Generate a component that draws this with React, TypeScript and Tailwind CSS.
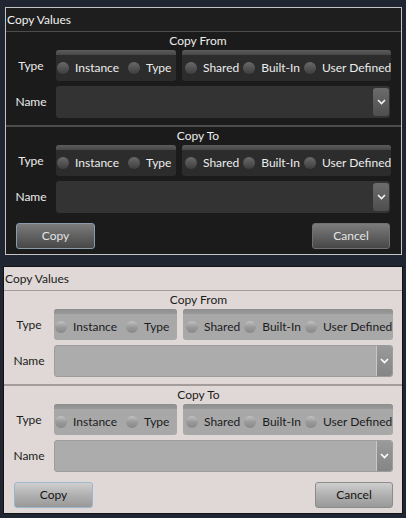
import React from "react";

type Theme = {
  frame: string;
  title: string;
  sep: string;
  text: string;
  box: string;
  stripe: string;
  radio: string;
  combo: string;
  drop: string;
  chevron: string;
  copyBtn: string;
  cancelBtn: string;
  btnText: string;
};

const dark: Theme = {
  frame: "border border-[#c4c4c4] bg-[#1b1b1b]",
  title: "bg-[#1e1e1e] text-[#f0f0f0]",
  sep: "bg-[#4c4c4c]",
  text: "text-[#ececec]",
  box: "bg-[#2c2c2c]",
  stripe: "bg-gradient-to-b from-[#5c5c5c] to-[#474747]",
  radio: "bg-gradient-to-b from-[#6a6a6a] to-[#3e3e3e]",
  combo: "bg-[#333333]",
  drop: "bg-gradient-to-b from-[#6c6c6c] to-[#4e4e4e] rounded-[3px] my-[2px] mr-[1px]",
  chevron: "#f2f2f2",
  copyBtn: "border-[#8a9cab]",
  cancelBtn: "border-[#707070]",
  btnText: "text-[#e4e4e4] bg-gradient-to-b from-[#7c7c7c] via-[#616161] to-[#484848]",
};

const light: Theme = {
  frame: "border border-[#141414] bg-[#e0d8d6]",
  title: "bg-[#e0d8d6] text-[#1a1a1a]",
  sep: "bg-[#a39c9a]",
  text: "text-[#1c1c1c]",
  box: "bg-[#a8a8a8]",
  stripe: "bg-gradient-to-b from-[#8e8e8e] to-[#999999]",
  radio: "bg-gradient-to-b from-[#c2c2c2] via-[#9a9a9a] to-[#888888]",
  combo: "bg-[#acacac] border border-[#9c9c9c]",
  drop: "bg-gradient-to-b from-[#9a9a9a] to-[#858585] border-l border-[#c8c8c8] rounded-r-[3px]",
  chevron: "#ffffff",
  copyBtn: "border-[#9db7cc]",
  cancelBtn: "border-[#8c8c8c]",
  btnText: "text-[#141414] bg-gradient-to-b from-[#cfcfcf] via-[#b0b0b0] to-[#999999]",
};

function Radio({ t, label }: { t: Theme; label: string }) {
  return (
    <div className="flex items-center gap-[6px] whitespace-nowrap">
      <span className={`block w-[12px] h-[12px] shrink-0 rounded-full ${t.radio}`} />
      <span className={t.text}>{label}</span>
    </div>
  );
}

function Chevron({ color }: { color: string }) {
  return (
    <svg width="9" height="6" viewBox="0 0 9 6">
      <path d="M1 1 L4.5 4.5 L8 1" fill="none" stroke={color} strokeWidth="1.6" />
    </svg>
  );
}

function Section({ t, heading, leftW }: { t: Theme; heading: string; leftW: string }) {
  return (
    <div className="flex flex-col pb-[7px]">
      <div className={`flex h-[18px] items-center justify-center ${t.text}`}>{heading}</div>
      <div className="flex h-[31px] items-center">
        <div className={`w-[50px] shrink-0 text-center ${t.text}`}>Type</div>
        <div className="flex flex-1 h-full gap-[6px]">
          <div className={`${leftW} shrink-0 flex flex-col rounded-[3px] overflow-hidden ${t.box}`}>
            <div className={`h-[5px] ${t.stripe}`} />
            <div className="flex flex-1 items-center pl-[1px] gap-[9px]">
              <Radio t={t} label="Instance" />
              <Radio t={t} label="Type" />
            </div>
          </div>
          <div className={`flex-1 flex flex-col rounded-[3px] overflow-hidden ${t.box}`}>
            <div className={`h-[5px] ${t.stripe}`} />
            <div className="flex flex-1 items-center pl-[3px] gap-[4px]">
              <Radio t={t} label="Shared" />
              <Radio t={t} label="Built-In" />
              <Radio t={t} label="User Defined" />
            </div>
          </div>
        </div>
      </div>
      <div className="flex h-[32px] items-center mt-[5px]">
        <div className={`w-[50px] shrink-0 text-center ${t.text}`}>Name</div>
        <div className={`flex flex-1 h-full justify-end rounded-[3px] ${t.combo}`}>
          <div className={`w-[16px] flex items-center justify-center ${t.drop}`}>
            <Chevron color={t.chevron} />
          </div>
        </div>
      </div>
    </div>
  );
}

function Dialog({ t, className, leftW, pr }: { t: Theme; className: string; leftW: string; pr: string }) {
  return (
    <div className={`${t.frame} ${className}`}>
      <div className={`h-[23px] flex items-center pl-[1px] ${t.title}`}>Copy Values</div>
      <div className={`h-px ${t.sep}`} />
      <div className={pr}>
        <Section t={t} heading="Copy From" leftW={leftW} />
      </div>
      <div className={`h-[2px] ${t.sep}`} />
      <div className={pr}>
        <Section t={t} heading="Copy To" leftW={leftW} />
        <div className="flex justify-between pl-[10px] pt-[3px] pb-[5px]">
          <button className={`w-[79px] h-[26px] rounded-[3px] border ${t.copyBtn} ${t.btnText}`}>Copy</button>
          <button className={`w-[78px] h-[26px] rounded-[3px] border ${t.cancelBtn} ${t.btnText}`}>Cancel</button>
        </div>
      </div>
    </div>
  );
}

export default function App() {
  return (
    <div
      className="w-[406px] h-[518px] bg-[#1f2531] pt-[7px] text-[12px] leading-none overflow-hidden"
      style={{ fontFamily: 'Lato, "Open Sans", sans-serif' }}
    >
      <Dialog t={dark} className="ml-[5px] w-[397px]" leftW="w-[120px]" pr="pr-[11px]" />
      <Dialog t={light} className="ml-[3px] w-[400px] mt-[11px]" leftW="w-[123px]" pr="pr-[9px]" />
    </div>
  );
}
